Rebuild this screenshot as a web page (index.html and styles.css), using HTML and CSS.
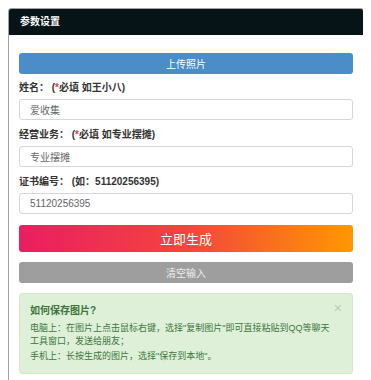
FILE: index.html
```html
<!DOCTYPE html>
<html lang="zh-CN">
<head>
  <meta charset="UTF-8" />
  <title>参数设置</title>
  <link rel="stylesheet" href="styles.css">
</head>
<body>
  <div class="panel">
    <div class="panel-head">参数设置</div>
    <div class="panel-body">
      <button class="btn btn-upload">上传照片</button>

      <div class="field">
        <label>姓名： (<span class="req">*</span>必填 如王小八)</label>
        <input type="text" value="爱收集">
      </div>

      <div class="field">
        <label>经营业务： (<span class="req">*</span>必填 如专业摆摊)</label>
        <input type="text" value="专业摆摊">
      </div>

      <div class="field">
        <label>证书编号： (如：51120256395)</label>
        <input type="text" value="51120256395">
      </div>

      <button class="btn btn-make">立即生成</button>
      <button class="btn btn-clear">清空输入</button>

      <div class="alert">
        <span class="close">&times;</span>
        <h4>如何保存图片?</h4>
        <p>电脑上：在图片上点击鼠标右键，选择"复制图片"即可直接粘贴到QQ等聊天工具窗口，发送给朋友；</p>
        <p>手机上：长按生成的图片，选择"保存到本地"。</p>
      </div>
    </div>
  </div>
</body>
</html>
```

FILE: styles.css
```css
body {
  font-family: "Liberation Sans", "Noto Sans CJK SC", sans-serif;
  background: #fff;
  color: #333;
  margin: 8px;
  font-size: 10px;
}

.panel {
  border: 1px solid #a3a3a3;
  border-radius: 3px;
  width: 354px;
}

.panel-head {
  background: #061418;
  color: #fff;
  height: 26px;
  line-height: 26px;
  padding-left: 11px;
  font-size: 10px;
  font-weight: bold;
  border-radius: 2px 2px 0 0;
}

.panel-body {
  padding: 18px 10px 15px;
}

.btn {
  display: block;
  width: 100%;
  border: none;
  border-radius: 3px;
  color: #fff;
  font-family: inherit;
  font-size: 10px;
  cursor: pointer;
}

.btn-upload {
  background: #4b8dc8;
  height: 21px;
  margin-bottom: 6px;
}

.field {
  margin-bottom: 7px;
}

.field label {
  display: block;
  font-weight: bold;
  line-height: 16px;
  margin-bottom: 3px;
  color: #333;
}

.req {
  color: #e53b3b;
}

.field input {
  display: block;
  box-sizing: border-box;
  width: 100%;
  height: 21px;
  border: 1px solid #d6d6d6;
  border-radius: 3px;
  padding: 0 10px;
  font-family: inherit;
  font-size: 10px;
  color: #666;
}

.btn-make {
  margin-top: 11px;
  height: 27px;
  font-size: 13px;
  background: linear-gradient(to right, #ea1e60, #f3443e 50%, #ff9800);
}

.btn-clear {
  margin-top: 10px;
  height: 21px;
  background: #9e9e9e;
  color: #eee;
}

.alert {
  position: relative;
  margin-top: 10px;
  background: #dff0d8;
  border: 1px solid #d6e9c6;
  border-radius: 3px;
  color: #3c763d;
  padding: 10px 20px 8px 10px;
  font-size: 9px;
}

.alert h4 {
  margin: 0 0 4px;
  font-size: 10px;
  font-weight: bold;
  line-height: 14px;
}

.alert p {
  margin: 0 0 2px;
  line-height: 13px;
}

.close {
  position: absolute;
  right: 10px;
  top: 6px;
  font-size: 14px;
  color: #b9cbb3;
}
```
